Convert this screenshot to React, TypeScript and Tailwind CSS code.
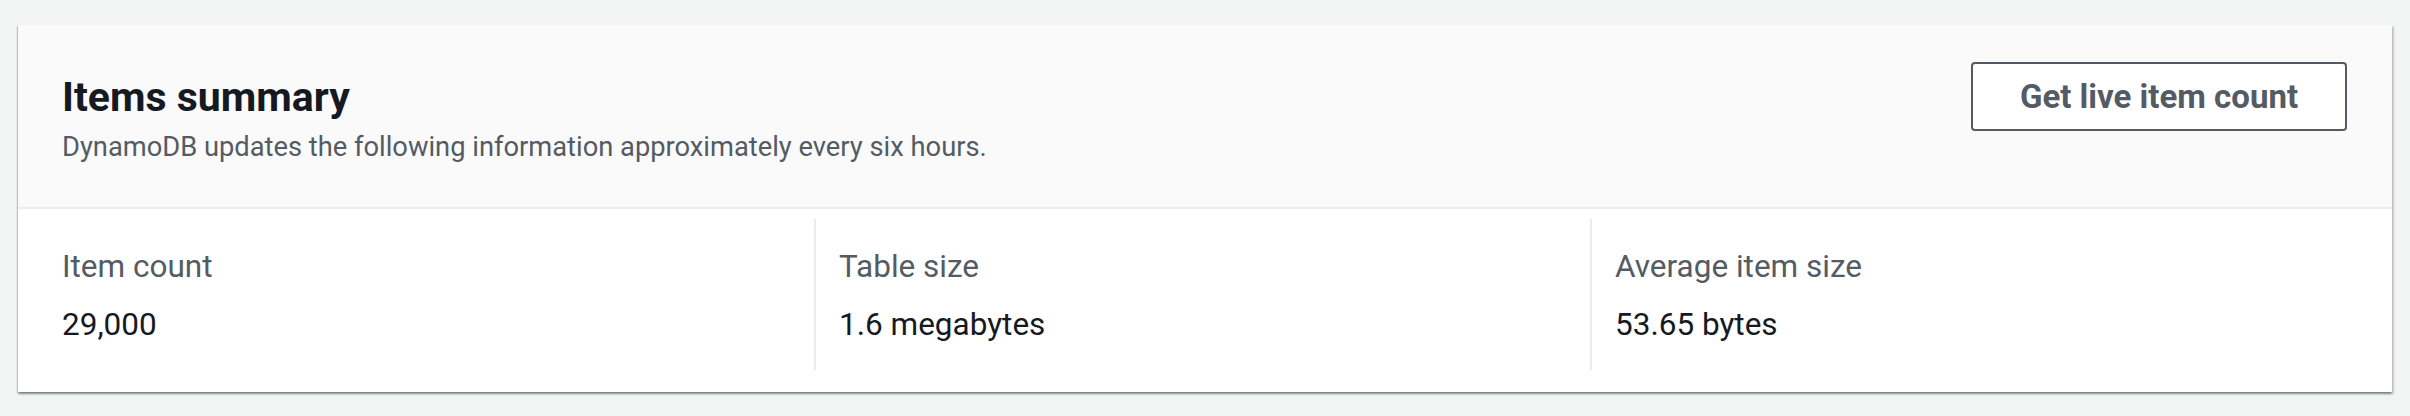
const stats = [
  { label: "Item count", value: "29,000" },
  { label: "Table size", value: "1.6 megabytes" },
  { label: "Average item size", value: "53.65 bytes" },
];

export default function App() {
  return (
    <div className="h-[416px] w-full bg-[#f2f3f3] px-[18px] pt-[25px] font-['Roboto',sans-serif]">
      <div className="bg-white shadow-[0_2px_2px_0_rgba(0,28,36,0.35),2px_2px_2px_0_rgba(0,28,36,0.15),-1px_1px_1px_0_rgba(0,28,36,0.12)]">
        <div className="flex h-[184px] justify-between border-b-2 border-[#eaeded] bg-[#fafafa] pl-[44px] pr-[45px] pt-[37px]">
          <div className="pt-[11px]">
            <h2 className="text-[41px] font-bold leading-[48px] text-[#16191f]">Items summary</h2>
            <p className="mt-[8px] text-[27.3px] leading-[36px] text-[#545b64]">
              DynamoDB updates the following information approximately every six hours.
            </p>
          </div>
          <button className="h-[69px] w-[376px] rounded-[4px] border-2 border-[#545b64] bg-white text-[33px] font-bold text-[#545b64]">
            Get live item count
          </button>
        </div>
        <div className="flex pb-[22px] pl-[44px] pt-[10px]">
          {stats.map((s, i) => (
            <div
              key={s.label}
              className={
                i === 0
                  ? "w-[752px] pb-[27px] pt-[30px]"
                  : i === 1
                    ? "w-[776px] border-l-2 border-[#eaeded] pb-[27px] pl-[23px] pt-[30px]"
                    : "flex-1 border-l-2 border-[#eaeded] pb-[27px] pl-[23px] pt-[30px]"
              }
            >
              <div className="text-[31.5px] leading-[36px] text-[#545b64]">{s.label}</div>
              <div className="mt-[22px] text-[31.5px] leading-[36px] text-[#16191f]">{s.value}</div>
            </div>
          ))}
        </div>
      </div>
    </div>
  );
}
